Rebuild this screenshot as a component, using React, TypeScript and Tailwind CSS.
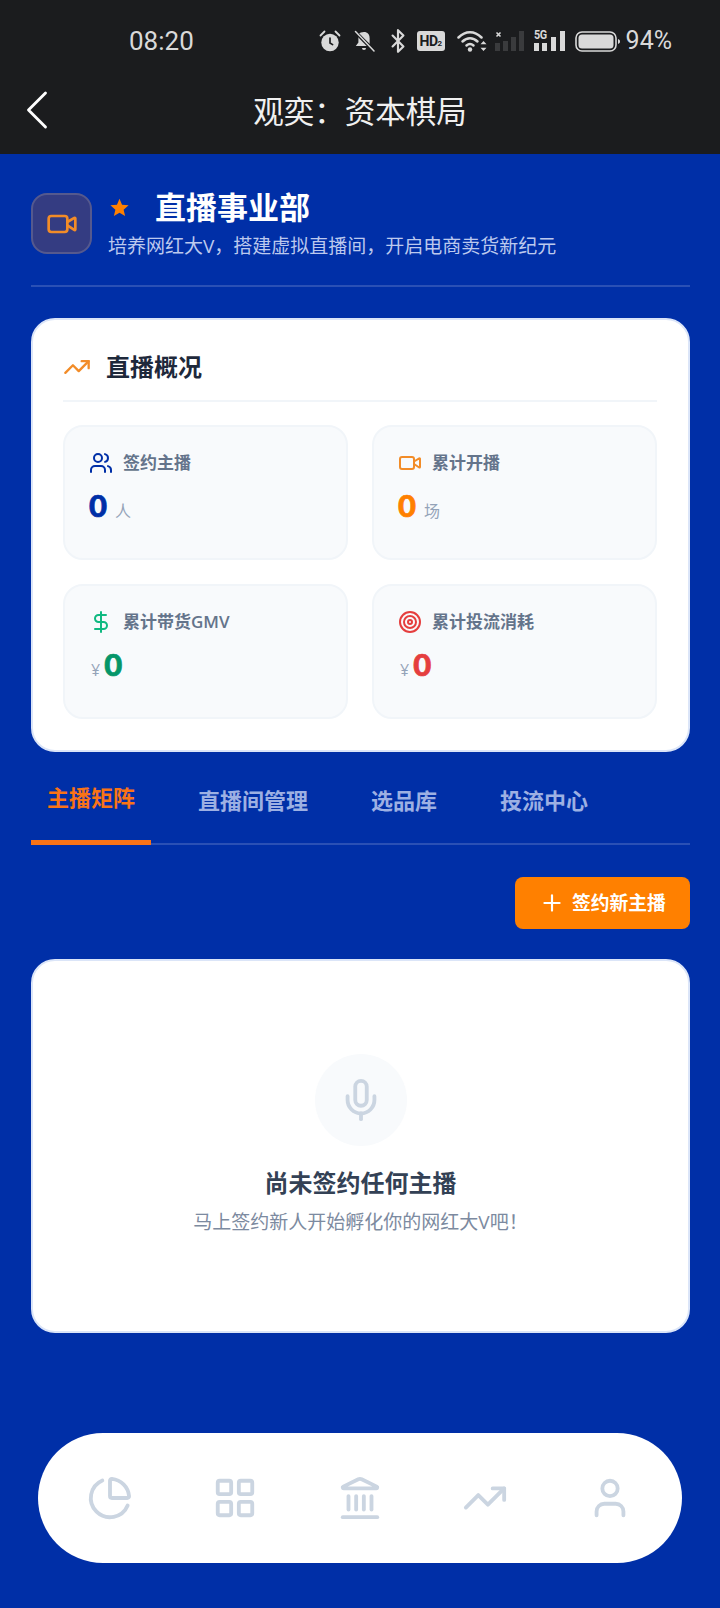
import React from 'react';
import { ChartPie, Landmark, LayoutGrid, Mic, Plus, Target, TrendingUp, User, Users, Video, DollarSign, Bluetooth, ChevronLeft } from 'lucide-react';

const AlarmIcon = () => (
  <svg width="22" height="22" viewBox="0 0 22 22" className="shrink-0">
    <circle cx="11" cy="12.5" r="8.7" fill="#d9d9d9" />
    <path d="M11 8v5l2.6 1.6" fill="none" stroke="#1b1c1e" strokeWidth="1.7" strokeLinecap="round" />
    <path d="M1.5 5.500 5.500 1.500M20.500 5.500l-4-4" fill="none" stroke="#d9d9d9" strokeWidth="1.800" strokeLinecap="round" />
  </svg>
);

const BellOffIcon = () => (
  <svg width="22" height="22" viewBox="0 0 22 22" className="shrink-0">
    <path d="M5.400 8v4.400L2.800 16h13.600L5.400 5.500z" fill="#d9d9d9" />
    <path d="M5.500 4C6.700 2.700 8.600 2 11 2c3.600 0 5.600 2.600 5.600 6v6L6 4.500z" fill="#d9d9d9" />
    <path d="M9 18h4a2 2 0 0 1-4 0z" fill="#d9d9d9" />
    <path d="M2 1.500 21 21" stroke="#1b1c1e" strokeWidth="3.500" />
    <path d="M2.500 1.500 21 21" stroke="#d9d9d9" strokeWidth="1.500" strokeLinecap="round" />
  </svg>
);

const WifiIcon = () => (
  <svg width="31" height="22" viewBox="0 0 31 22" className="shrink-0">
    <g fill="none" stroke="#d9d9d9" strokeWidth="2.500" strokeLinecap="round">
      <path d="M1.500 7.500C8.500 .5 17.500 .5 24.500 7.500" />
      <path d="M5.500 11.500c4.500-4.300 10.500-4.300 15 0" />
      <path d="M9.500 15.500c2.300-2 4.700-2 7 0" />
    </g>
    <circle cx="13" cy="19.500" r="2.200" fill="#d9d9d9" />
    <path d="M26.500 11l3 3.200h-6zM26.500 21l3-3.200h-6z" fill="#d9d9d9" />
  </svg>
);

const SignalEmpty = () => (
  <svg width="29" height="22" viewBox="0 0 29 22" className="shrink-0">
    <path d="M1.500 2.500l4 4M5.500 2.500l-4 4" stroke="#d9d9d9" strokeWidth="1.600" />
    <rect x="0" y="13" width="5" height="8" fill="#3a3b3d" />
    <rect x="8" y="11" width="5" height="10" fill="#3a3b3d" />
    <rect x="16" y="7" width="5" height="14" fill="#3a3b3d" />
    <rect x="24" y="1" width="5" height="20" fill="#3a3b3d" />
  </svg>
);

const Signal5G = () => (
  <div className="relative w-[31px] h-[22px] shrink-0">
    <svg width="31" height="22" viewBox="0 0 31 22" className="absolute inset-0">
      <rect x="0" y="13" width="5" height="8" fill="#d9d9d9" />
      <rect x="8" y="13" width="5" height="8" fill="#d9d9d9" />
      <rect x="17" y="7" width="5" height="14" fill="#d9d9d9" />
      <rect x="26" y="1" width="5" height="20" fill="#d9d9d9" />
    </svg>
    <span className="absolute left-0 top-[-1px] text-[12px] leading-[13px] font-bold text-[#d9d9d9] tracking-[-0.5px] font-['Roboto',sans-serif] scale-x-90 origin-left">5G</span>
  </div>
);

const BatteryIcon = () => (
  <svg width="45" height="21" viewBox="0 0 45 21" className="shrink-0">
    <rect x="1" y="1" width="40" height="19" rx="6" fill="none" stroke="#d9d9d9" strokeWidth="1.600" />
    <rect x="3.500" y="3.500" width="35" height="14" rx="3.500" fill="#d9d9d9" />
    <path d="M43 8c1.300.4 2 1.200 2 2.500s-.7 2.100-2 2.500z" fill="#d9d9d9" />
  </svg>
);

const SharpStar = () => (
  <svg width="19" height="19" viewBox="0 0 24 24" className="shrink-0 ml-[2px]">
    <path d="M12 1l3.200 7.600 8.300.7-6.300 5.400 1.900 8.100L12 18.500l-7.100 4.300 1.900-8.100L.5 9.300l8.300-.7z" fill="#ff8000" />
  </svg>
);

const StatCard = ({ icon, label, value, valueColor, unit, prefix }: {
  icon: React.ReactNode;
  label: string;
  value: string;
  valueColor: string;
  unit?: string;
  prefix?: boolean;
}) => (
  <div className="h-[135px] rounded-[20px] bg-[#f8fafc] border-2 border-[#f1f5f9] px-[24px] pt-[22px]">
    <div className="flex items-center h-[28px]">
      <div className="w-[34px] shrink-0 flex items-center">{icon}</div>
      <span className="text-[17px] font-semibold text-[#64748b]">{label}</span>
    </div>
    <div className="flex items-baseline mt-[6px]">
      {prefix && <span className="text-[16px] text-[#94a3b8] ml-[2px] mr-[4px]">¥</span>}
      <span className={`text-[31px] leading-[44px] font-black font-['Lato',sans-serif] [-webkit-text-stroke:0.7px_currentColor] ${valueColor}`}>{value}</span>
      {unit && <span className="text-[16px] text-[#94a3b8] ml-[8px]">{unit}</span>}
    </div>
  </div>
);

export default function App() {
  return (
    <div className="w-[720px] h-[1608px] overflow-hidden bg-[#002fa7] flex flex-col font-['Open_Sans','Noto_Sans_CJK_SC',sans-serif]">
      <div className="h-[154px] shrink-0 bg-[#1b1c1e] flex flex-col">
        <div className="h-[82px] pt-[29px] pl-[129px] pr-[48px] flex items-start justify-between font-['Roboto','Noto_Sans_CJK_SC',sans-serif]">
          <span className="text-[26px] leading-[24px] text-[#d9d9d9]">08:20</span>
          <div className="flex items-center h-[22px] translate-y-[1px]">
            <AlarmIcon />
            <div className="ml-[12px]"><BellOffIcon /></div>
            <Bluetooth size={26} strokeWidth={2} className="ml-[10px] text-[#d9d9d9]" />
            <div className="ml-[6px] w-[28px] h-[20px] rounded-[3px] bg-[#d9d9d9] flex items-baseline justify-center text-[#1b1c1e] font-bold text-[14px] leading-[20px] tracking-[-0.5px]">
              HD<span className="text-[8px] leading-[8px]">2</span>
            </div>
            <div className="ml-[12px]"><WifiIcon /></div>
            <div className="ml-[7px]"><SignalEmpty /></div>
            <div className="ml-[10px]"><Signal5G /></div>
            <div className="ml-[10px]"><BatteryIcon /></div>
            <span className="ml-[6px] text-[25px] leading-[24px] text-[#d9d9d9]">94%</span>
          </div>
        </div>
        <div className="relative flex items-center justify-center h-[56px]">
          <ChevronLeft size={68} strokeWidth={1} className="absolute left-[3px] top-1/2 -translate-y-1/2 text-white" />
          <span className="text-[30.5px] leading-[40px] text-[#f0f0f0] font-['Noto_Sans_CJK_SC',sans-serif]">{'观奕\uFF1A资本棋局'}</span>
        </div>
      </div>

      <div className="flex-1 flex flex-col pl-[31px] pr-[30px]">
        <div className="flex items-start pt-[39px] pb-[25px] border-b-2 border-[#2a50b5]">
          <div className="w-[61px] h-[61px] shrink-0 rounded-[16px] bg-[#343c82] border-2 border-[#55598e] flex items-center justify-center">
            <Video size={32} strokeWidth={2} className="text-[#f28c28]" />
          </div>
          <div className="ml-[16px]">
            <div className="flex items-center h-[36px] mt-[-4px]">
              <SharpStar />
              <span className="ml-[26px] text-[31px] leading-[36px] font-bold text-white">直播事业部</span>
            </div>
            <p className="mt-[7px] text-[19px] leading-[28px] text-[#bcc9ee]">{'培养网红大V\uFF0C搭建虚拟直播间\uFF0C开启电商卖货新纪元'}</p>
          </div>
        </div>

        <div className="mt-[31px] h-[434px] rounded-[24px] bg-white border-2 border-[#dbe5f8] pl-[30px] pr-[31px] pt-[29px]">
          <div className="flex items-center h-[36px]">
            <TrendingUp size={28} strokeWidth={2} className="text-[#f28c28]" />
            <span className="ml-[15px] text-[24px] leading-[36px] font-semibold text-[#1e293b]">直播概况</span>
          </div>
          <div className="mt-[15px] border-t-2 border-[#f1f5f9]" />
          <div className="mt-[23px] grid grid-cols-2 gap-x-[24px] gap-y-[24px]">
            <StatCard icon={<Users size={24} className="text-[#002fa7]" />} label="签约主播" value="0" valueColor="text-[#002fa7]" unit="人" />
            <StatCard icon={<Video size={24} className="text-[#f28c28]" />} label="累计开播" value="0" valueColor="text-[#ff8000]" unit="场" />
            <StatCard icon={<DollarSign size={24} className="text-[#10b981]" />} label="累计带货GMV" value="0" valueColor="text-[#059669]" prefix />
            <StatCard icon={<Target size={24} className="text-[#e53e3e]" />} label="累计投流消耗" value="0" valueColor="text-[#e53e3e]" prefix />
          </div>
        </div>

        <div className="mt-[20px] h-[73px] flex border-b-2 border-[#2a50b5] gap-[31px]">
          <div className="h-[73px] px-[16px] border-b-[5px] border-[#f97316] pt-[9px] text-[22px] leading-[32px] font-bold text-[#f97316]">主播矩阵</div>
          <div className="px-[16px] pt-[12px] text-[22px] leading-[32px] font-semibold text-[#9db0e3]">直播间管理</div>
          <div className="px-[16px] pt-[12px] text-[22px] leading-[32px] font-semibold text-[#9db0e3]">选品库</div>
          <div className="px-[16px] pt-[12px] text-[22px] leading-[32px] font-semibold text-[#9db0e3]">投流中心</div>
        </div>

        <div className="mt-[32px] flex justify-end">
          <button className="w-[175px] h-[52px] rounded-[8px] bg-[#ff8000] flex items-center pl-[24px] text-white">
            <Plus size={26} strokeWidth={2} />
            <span className="ml-[7px] text-[18.8px] font-bold">签约新主播</span>
          </button>
        </div>

        <div className="mt-[30px] h-[374px] rounded-[24px] bg-white border-2 border-[#dbe5f8] flex flex-col items-center pt-[93px]">
          <div className="w-[92px] h-[92px] rounded-full bg-[#f8fafc] flex items-center justify-center">
            <Mic size={46} strokeWidth={2} className="text-[#cbd5e1]" />
          </div>
          <h3 className="mt-[20px] text-[24px] leading-[34px] font-semibold text-[#334155]">尚未签约任何主播</h3>
          <p className="mt-[9px] text-[19px] leading-[26px] text-[#7c8aa0]">{'马上签约新人开始孵化你的网红大V吧\uFF01'}</p>
        </div>

        <div className="mt-[100px] ml-[7px] mr-[8px] h-[130px] rounded-full bg-white flex items-center justify-between px-[49px] text-[#cbd5e1]">
          <ChartPie size={46} strokeWidth={2} />
          <LayoutGrid size={46} strokeWidth={2} />
          <Landmark size={46} strokeWidth={2} />
          <TrendingUp size={46} strokeWidth={2} />
          <User size={46} strokeWidth={2} />
        </div>
      </div>
    </div>
  );
}
